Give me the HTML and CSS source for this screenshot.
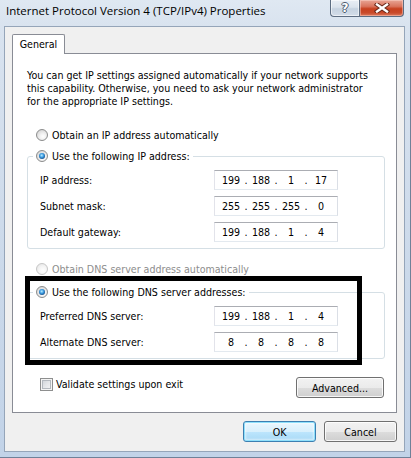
FILE: index.html
```html
<!DOCTYPE html>
<html lang="en">
<head>
<meta charset="utf-8">
<title>Internet Protocol Version 4 (TCP/IPv4) Properties</title>
<link rel="stylesheet" href="styles.css">
</head>
<body>
<div class="window">
  <header class="titlebar">
    <span class="title">Internet Protocol Version 4 (TCP/IPv4) Properties</span>
    <div class="caption">
      <div class="cap help">?</div>
      <div class="cap close">
        <svg width="18" height="10" viewBox="0 0 18 10">
          <path d="M4 1.5L14 8.5M14 1.5L4 8.5" stroke="#6b2a1c" stroke-width="4.4" stroke-linecap="square" fill="none"/>
          <path d="M4 1.5L14 8.5M14 1.5L4 8.5" stroke="#ffffff" stroke-width="2.4" stroke-linecap="square" fill="none"/>
        </svg>
      </div>
    </div>
  </header>
  <main class="client">
    <div class="tabs"><div class="tab">General</div></div>
    <section class="page">
      <p class="intro">You can get IP settings assigned automatically if your network supports<br>this capability. Otherwise, you need to ask your network administrator<br>for the appropriate IP settings.</p>

      <div class="opt opt-first"><span class="radio"></span>Obtain an IP address automatically</div>

      <fieldset class="group">
        <legend><span class="legend-in"><span class="radio on"></span>Use the following IP address:</span></legend>
        <div class="rows">
          <div class="row"><span class="lbl">IP address:</span>
            <div class="ip"><span>199</span><i>.</i><span>188</span><i>.</i><span>1</span><i>.</i><span>17</span></div></div>
          <div class="row"><span class="lbl">Subnet mask:</span>
            <div class="ip"><span>255</span><i>.</i><span>255</span><i>.</i><span>255</span><i>.</i><span>0</span></div></div>
          <div class="row"><span class="lbl">Default gateway:</span>
            <div class="ip"><span>199</span><i>.</i><span>188</span><i>.</i><span>1</span><i>.</i><span>4</span></div></div>
        </div>
      </fieldset>

      <div class="opt opt-dns disabled"><span class="radio off"></span>Obtain DNS server address automatically</div>

      <fieldset class="group group-dns">
        <legend><span class="legend-in"><span class="radio on"></span>Use the following DNS server addresses:</span></legend>
        <div class="rows">
          <div class="row"><span class="lbl">Preferred DNS server:</span>
            <div class="ip"><span>199</span><i>.</i><span>188</span><i>.</i><span>1</span><i>.</i><span>4</span></div></div>
          <div class="row"><span class="lbl">Alternate DNS server:</span>
            <div class="ip"><span>8</span><i>.</i><span>8</span><i>.</i><span>8</span><i>.</i><span>8</span></div></div>
        </div>
      </fieldset>

      <div class="bottom">
        <div class="check-row"><span class="check"></span>Validate settings upon exit</div>
        <button class="btn adv">Advanced...</button>
      </div>
    </section>
    <footer class="actions">
      <button class="btn ok">OK</button>
      <button class="btn cancel">Cancel</button>
    </footer>
  </main>
</div>
<div class="annotation"></div>
</body>
</html>
```

FILE: styles.css
```css
* { box-sizing: border-box; }
html, body { margin: 0; padding: 0; }
body {
  width: 411px;
  height: 458px;
  overflow: hidden;
  position: relative;
  font-family: "DejaVu Sans Condensed", "DejaVu Sans", sans-serif;
  font-stretch: semi-condensed;
  font-size: 10.6px;
  color: #000;
  background: #d6e1ee;
}

.window {
  width: 411px;
  height: 458px;
  display: flex;
  flex-direction: column;
  padding: 0 5px 5px 4px;
  background: linear-gradient(180deg, #dfe8f2 0px, #d9e3ef 26px, #cbd9ea 60%, #c2d3e8 100%);
  border-right: 1px solid #6f8198;
  border-bottom: 1px solid #6f8198;
}

/* title bar */
.titlebar {
  height: 26px;
  flex: none;
  display: flex;
  justify-content: space-between;
  align-items: flex-start;
}
.title {
  font-family: "Open Sans", sans-serif;
  font-stretch: normal;
  font-size: 11.5px;
  line-height: 16px;
  padding: 3px 0 0 2px;
  color: #000;
  white-space: nowrap;
}
.caption {
  display: flex;
  margin-right: 1px;
}
.cap {
  height: 17px;
  display: flex;
  align-items: center;
  justify-content: center;
  border: 1px solid #5d6d82;
  border-top: none;
}
.help {
  width: 29px;
  border-right: none;
  border-bottom-left-radius: 4px;
  background: linear-gradient(180deg, #e9eef5 0%, #dbe3ed 45%, #c6d2e0 55%, #d3dde9 100%);
  box-shadow: inset 0 0 0 1px rgba(255,255,255,0.55);
  font-family: "DejaVu Sans", sans-serif;
  font-stretch: normal;
  font-weight: bold;
  font-size: 12px;
  color: #fff;
  text-shadow: 1px 0 0 #4d5c70, -1px 0 0 #4d5c70, 0 1px 0 #4d5c70, 0 -1px 0 #4d5c70;
}
.close {
  width: 45px;
  border-bottom-right-radius: 4px;
  background: linear-gradient(180deg, #e8a595 0%, #d9745d 40%, #c7401f 55%, #c94a2b 80%, #dc7a5e 100%);
  box-shadow: inset 0 0 0 1px rgba(255,220,210,0.45);
}

/* client */
.client {
  flex: 1;
  display: flex;
  flex-direction: column;
  background: #f0f0f0;
  border: 1px solid #95a5b9;
  padding: 7px 7px 9px 7px;
}
.tabs {
  display: flex;
  height: 20px;
  margin-bottom: -1px;
  position: relative;
  z-index: 1;
}
.tab {
  width: 53px;
  height: 20px;
  background: #fff;
  border: 1px solid #898c95;
  border-bottom: none;
  border-radius: 2px 2px 0 0;
  text-align: center;
  line-height: 17px;
  padding-top: 1px;
}
.page {
  height: 360px;
  flex: none;
  background: #fff;
  border: 1px solid #898c95;
  padding: 15px 11px 0 14px;
}
.intro {
  margin: 0;
  line-height: 13px;
  white-space: nowrap;
}

.opt {
  height: 14px;
  line-height: 14px;
  display: flex;
  align-items: center;
  padding-left: 9px;
}
.opt-first { margin-top: 20px; }
.opt-dns { margin-top: 13px; }
.disabled { color: #8d8d8d; }

.radio {
  width: 12px;
  height: 12px;
  flex: none;
  border-radius: 50%;
  border: 1px solid #8b8c8c;
  background: radial-gradient(circle at 60% 65%, #ffffff 0%, #f1f1f1 35%, #c9c9c9 100%);
  margin-right: 4px;
  position: relative;
}
.radio.on::after {
  content: "";
  position: absolute;
  left: 2px;
  top: 2px;
  width: 6px;
  height: 6px;
  border-radius: 50%;
  background: radial-gradient(circle at 45% 40%, #b9ecff 0%, #3a9ae0 40%, #10427c 80%, #0c2e5a 100%);
}
.radio.off {
  border-color: #c6c6c6;
  background: radial-gradient(circle at 60% 65%, #ffffff 0%, #f6f6f6 40%, #e2e2e2 100%);
}

.group {
  margin: 7px 0 0;
  padding: 7px 12px 6px 12px;
  border: 1px solid #d5dfe5;
  border-radius: 3px;
  min-width: 0;
}
.group-dns { margin-top: 9px; }
.group legend {
  padding: 0 3px;
  margin-left: -7px;
  height: 14px;
  line-height: 14px;
}
.legend-in {
  display: flex;
  align-items: center;
  height: 14px;
}
.rows {
  display: flex;
  flex-direction: column;
  gap: 6px;
}
.row {
  display: flex;
  align-items: center;
  height: 20px;
}
.lbl {
  width: 174px;
  flex: none;
}
.ip {
  width: 124px;
  height: 20px;
  display: flex;
  align-items: center;
  padding-left: 3px;
  background: #fff;
  border: 1px solid;
  border-color: #abadb3 #dbdfe6 #e3e9ef #e2e3ea;
}
.ip span {
  width: 26px;
  text-align: center;
}
.ip i {
  width: 4px;
  font-style: normal;
  text-align: center;
}

.bottom {
  margin-top: 18px;
  display: flex;
  justify-content: space-between;
  align-items: flex-start;
  padding-left: 13px;
  padding-right: 1px;
}
.check-row {
  height: 14px;
  line-height: 14px;
  display: flex;
  align-items: center;
}
.check {
  width: 13px;
  height: 13px;
  flex: none;
  margin-right: 3px;
  border: 1px solid #8e8f8f;
  background: linear-gradient(135deg, #c9ced4 0%, #e4e6e9 50%, #f7f7f7 100%);
  box-shadow: inset 0 0 0 1px #f4f4f4, inset 0 0 0 2px #b4b9bf;
}

/* buttons */
.btn {
  height: 21px;
  padding: 0;
  font: inherit;
  font-stretch: semi-condensed;
  color: #000;
  border: 1px solid #707070;
  border-radius: 3px;
  background: linear-gradient(180deg, #f2f2f2 0%, #ebebeb 50%, #dddddd 50%, #cfcfcf 100%);
  box-shadow: inset 0 0 0 1px rgba(255,255,255,0.8);
}
.adv { width: 88px; }
.actions {
  margin-top: 8px;
  display: flex;
  justify-content: flex-end;
  gap: 8px;
}
.actions .btn { width: 73px; }
.btn.ok {
  border-color: #3c7fb1;
  background: linear-gradient(180deg, #eaf6fd 0%, #d9f0fc 50%, #bee6fd 50%, #a7d9f5 100%);
  box-shadow: inset 0 0 0 1px #8fe0fb, inset 0 0 2px 2px rgba(255,255,255,0.5);
}

/* highlight annotation drawn over the dialog */
.annotation {
  position: absolute;
  left: 25px;
  top: 276px;
  width: 337px;
  height: 89px;
  border: 5px solid #000;
  pointer-events: none;
}
```
